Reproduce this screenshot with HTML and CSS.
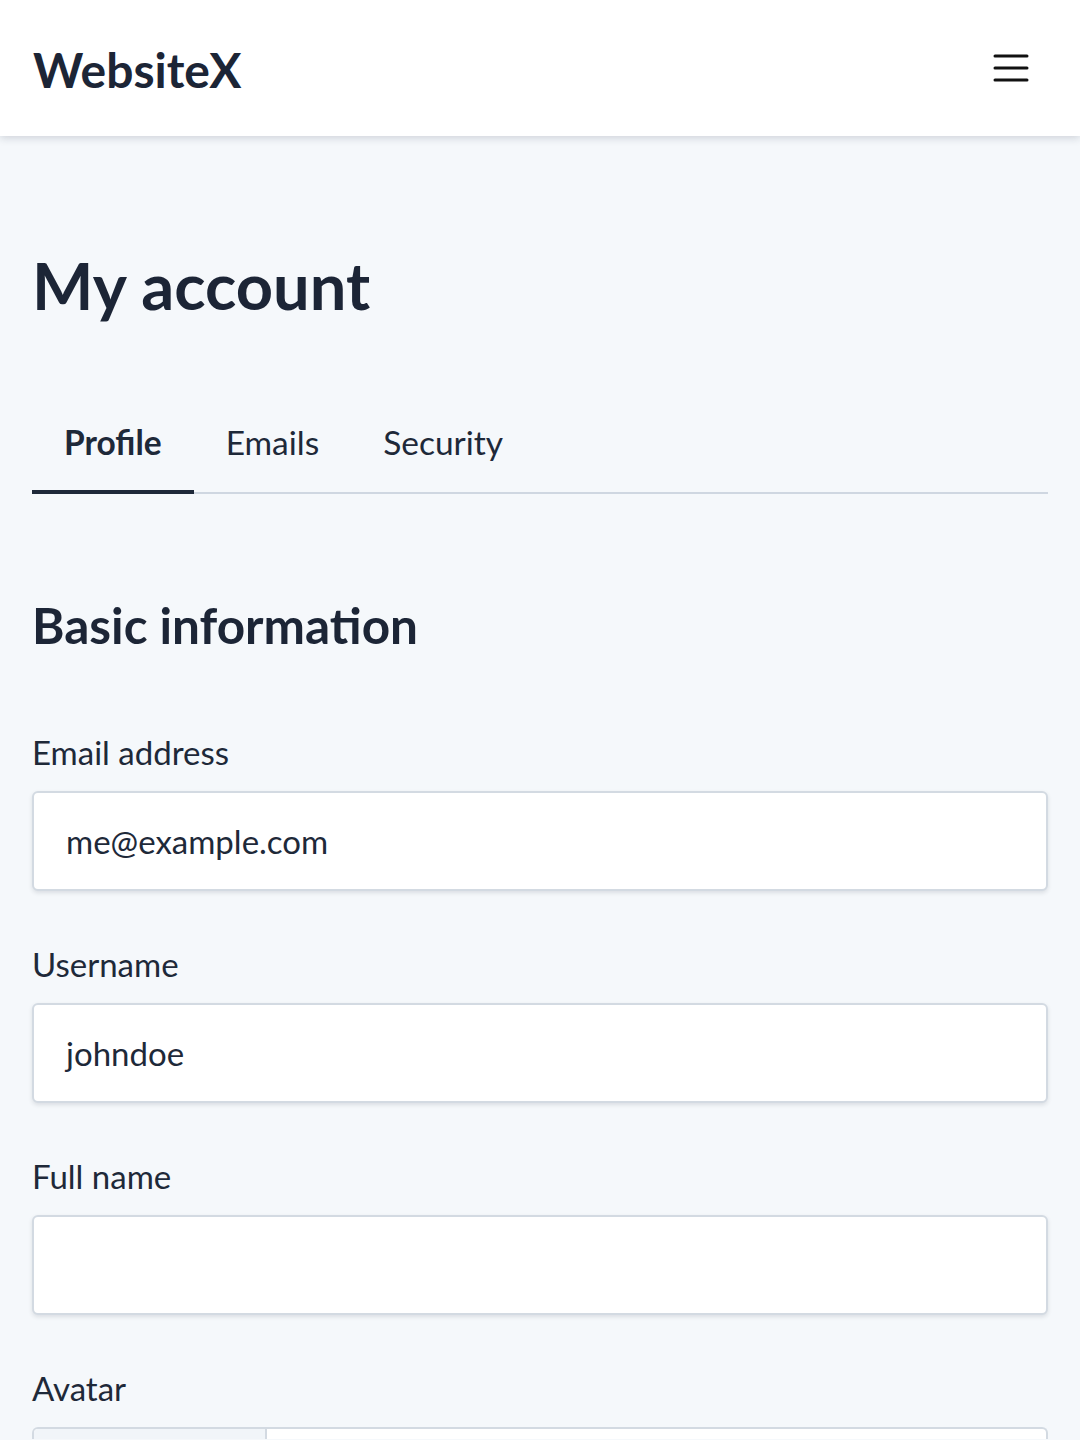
FILE: index.html
```html
<!DOCTYPE html>
<html lang="en">
<head>
<meta charset="utf-8">
<title>My account</title>
<link rel="stylesheet" href="styles.css">
</head>
<body>
<header class="topbar">
  <div class="brand">WebsiteX</div>
  <button class="menu-btn" aria-label="Menu">
    <svg width="36" height="30" viewBox="0 0 36 30"><path d="M2 3h32M2 15h32M2 27h32" stroke="#111" stroke-width="3" stroke-linecap="round"/></svg>
  </button>
</header>
<main class="page">
  <h1 class="title">My account</h1>
  <nav class="tabs">
    <a class="tab active">Profile</a>
    <a class="tab">Emails</a>
    <a class="tab">Security</a>
  </nav>
  <h2 class="section">Basic information</h2>
  <div class="field">
    <label class="label">Email address</label>
    <div class="input">me@example.com</div>
  </div>
  <div class="field">
    <label class="label">Username</label>
    <div class="input">johndoe</div>
  </div>
  <div class="field">
    <label class="label">Full name</label>
    <div class="input"></div>
  </div>
  <div class="field">
    <label class="label">Avatar</label>
    <div class="file">
      <div class="file-btn"></div>
      <div class="file-name"></div>
    </div>
  </div>
</main>
</body>
</html>
```
FILE: styles.css
```css
* { box-sizing: border-box; }
html, body { margin: 0; padding: 0; }
body {
  background: #f5f8fb;
  font-family: Lato, "Noto Sans", sans-serif;
  color: #1e2939;
  width: 1080px;
  height: 1440px;
  overflow: hidden;
}
.topbar {
  height: 136px;
  background: #fff;
  display: flex;
  align-items: center;
  justify-content: space-between;
  padding: 0 51px 0 33px;
  box-shadow: 0 2px 8px rgba(30, 41, 59, 0.18);
  position: relative;
}
.brand {
  font-size: 48px;
  font-weight: 700;
  color: #1c2536;
  margin-top: 2px;
}
.menu-btn {
  border: 0;
  background: none;
  padding: 0;
  display: flex;
}
.page { padding: 0 32px; }
.title {
  margin: 109px 0 0;
  font-size: 65px;
  font-weight: 700;
  line-height: 80px;
  color: #1c2536;
}
.tabs {
  display: flex;
  margin-top: 77px;
  border-bottom: 2px solid #cfd7e1;
}
.tab {
  padding: 18px 32px 26px;
  font-size: 33.5px;
  line-height: 44px;
  color: #1e2939;
  margin-bottom: -2px;
  border-bottom: 4px solid transparent;
}
.tab.active {
  font-weight: 700;
  border-bottom: 4px solid #1e2939;
}
.section {
  margin: 101px 0 0;
  font-size: 49.5px;
  line-height: 60px;
  font-weight: 700;
  color: #1c2536;
}
.field { margin-top: 73px; }
.field + .field { margin-top: 49px; }
.label {
  display: block;
  font-size: 33px;
  line-height: 48px;
  color: #1e2939;
  margin-bottom: 15px;
}
.input {
  height: 100px;
  background: #fff;
  border: 2px solid #d3dae2;
  border-radius: 6px;
  box-shadow: 0 2px 4px rgba(30, 41, 59, 0.12);
  padding: 0 32px;
  display: flex;
  align-items: center;
  font-size: 33px;
  color: #1e2939;
}
.file {
  height: 12px;
  display: flex;
  border: 2px solid #d3dae2;
  border-bottom: 0;
  border-radius: 6px 6px 0 0;
  background: #fff;
  overflow: hidden;
}
.file-btn {
  width: 233px;
  background: #f1f5f9;
  border-right: 2px solid #d3dae2;
}
.file-name { flex: 1; }
```
